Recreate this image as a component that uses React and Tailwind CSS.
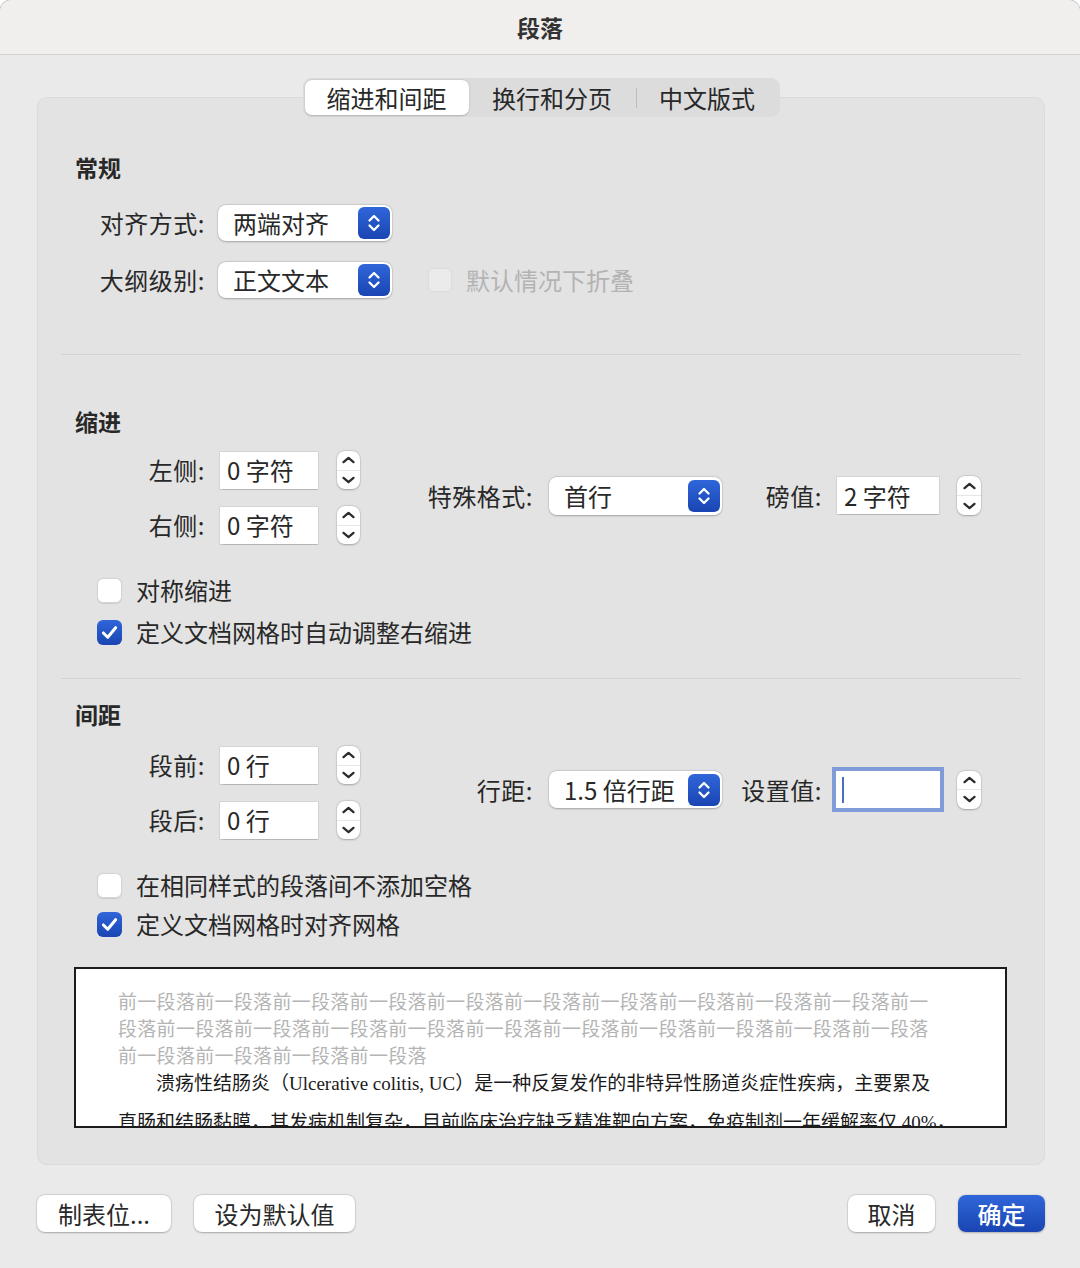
import React from "react";

const BLUE = "bg-gradient-to-b from-[#3066da] to-[#1a45b2]";

const PopupArrows = () => (
  <svg width="14" height="22" viewBox="0 0 14 22" fill="none" stroke="white" strokeWidth="2.3" strokeLinecap="round" strokeLinejoin="round">
    <path d="M2.5 8.5 L7 4 L11.5 8.5" />
    <path d="M2.5 13.5 L7 18 L11.5 13.5" />
  </svg>
);

const Popup = ({ text, w = "w-[174px]", h = "h-[36px]" }) => (
  <div className={`${w} ${h} bg-white rounded-[8px] shadow-[0_0.5px_2px_rgba(0,0,0,0.25),0_0_0_0.5px_rgba(0,0,0,0.08)] flex items-center pl-[15px] pr-[2px]`}>
    <span className="flex-1 leading-none">{text}</span>
    <div className={`w-[32px] h-[32px] rounded-[6px] ${BLUE} flex items-center justify-center`}>
      <PopupArrows />
    </div>
  </div>
);

const Stepper = ({ w = "w-[23px]", h = "h-[38px]", className = "" }) => (
  <div className={`${w} ${h} ${className} bg-white rounded-[8px] shadow-[0_0.5px_2px_rgba(0,0,0,0.25),0_0_0_0.5px_rgba(0,0,0,0.08)] flex flex-col`}>
    <div className="flex-1 flex items-center justify-center border-b border-[#e6e6e6]">
      <svg width="13" height="8" viewBox="0 0 13 8" fill="none" stroke="#2b2b2b" strokeWidth="2.2" strokeLinecap="round" strokeLinejoin="round">
        <path d="M1.5 6.2 L6.5 1.8 L11.5 6.2" />
      </svg>
    </div>
    <div className="flex-1 flex items-center justify-center">
      <svg width="13" height="8" viewBox="0 0 13 8" fill="none" stroke="#2b2b2b" strokeWidth="2.2" strokeLinecap="round" strokeLinejoin="round">
        <path d="M1.5 1.8 L6.5 6.2 L11.5 1.8" />
      </svg>
    </div>
  </div>
);

const Field = ({ text, w = "w-[98px]", className = "" }) => (
  <div className={`${w} h-[37px] ${className} bg-white shadow-[0_0_0_0.5px_rgba(0,0,0,0.12),0_0.5px_1px_rgba(0,0,0,0.15)] flex items-center pl-[7px] leading-none`}>
    {text}
  </div>
);

const Check = ({ checked, label }) => (
  <div className="h-[32px] flex items-center pl-[36px]">
    {checked ? (
      <div className={`w-[25px] h-[25px] rounded-[6px] ${BLUE} flex items-center justify-center`}>
        <svg width="21" height="21" viewBox="0 0 24 24" fill="none" stroke="white" strokeWidth="3.4" strokeLinecap="round" strokeLinejoin="round">
          <path d="M5 12.5 L10 17.5 L19 6.5" />
        </svg>
      </div>
    ) : (
      <div className="w-[25px] h-[25px] rounded-[6px] bg-white border border-[#d4d4d4] shadow-[0_0.5px_1px_rgba(0,0,0,0.1)]" />
    )}
    <span className="ml-[14px] leading-none">{label}</span>
  </div>
);

const Label = ({ w = "w-[144px]", children, className = "" }) => (
  <div className={`${w} ${className} text-right leading-none tracking-[0.5px]`}>{children}</div>
);

const Header = ({ children, className = "" }) => (
  <div className={`ml-[14px] h-[32px] flex items-center text-[23px] font-bold ${className}`}>{children}</div>
);

const LeftRows = ({ rows }) => (
  <div className="flex flex-col gap-[17px]">
    {rows.map((r) => (
      <div key={r[0]} className="h-[38px] flex items-center">
        <Label>{r[0]}</Label>
        <Field text={r[1]} className="ml-[15px]" />
        <Stepper className="ml-[19px]" />
      </div>
    ))}
  </div>
);

const grayLines = [
  "前一段落前一段落前一段落前一段落前一段落前一段落前一段落前一段落前一段落前一段落前一",
  "段落前一段落前一段落前一段落前一段落前一段落前一段落前一段落前一段落前一段落前一段落",
  "前一段落前一段落前一段落前一段落",
];

export default function App() {
  return (
    <div className="w-[1080px] h-[1268px] bg-white font-['Noto_Sans_CJK_SC','Noto_Sans',sans-serif] text-[24px] text-[#282828]">
      <div className="h-full rounded-t-[12px] bg-[#eaeaea] shadow-[0_0_0_1px_#c8c8c8] overflow-hidden flex flex-col">
        {/* title bar */}
        <div className="h-[55px] bg-[#f0efee] border-b border-[#d2d2d2] flex items-center justify-center">
          <span className="text-[23px] font-bold text-[#333]">段落</span>
        </div>

        <div className="pl-[37px] flex flex-col">
          {/* tabs */}
          <div className="relative z-10 mt-[23px] w-[1008px] flex justify-center">
            <div className="h-[39px] p-[2px] rounded-[9px] bg-[#dcdcdc] flex items-center">
              <div className="w-[164px] h-[35px] rounded-[7px] bg-white shadow-[0_0.5px_2px_rgba(0,0,0,0.2)] flex items-center justify-center leading-none">缩进和间距</div>
              <div className="w-[167px] flex items-center justify-center leading-none">换行和分页</div>
              <div className="w-px h-[20px] bg-[#bdbdbd]" />
              <div className="w-[141px] flex items-center justify-center leading-none">中文版式</div>
            </div>
          </div>

          {/* group box */}
          <div className="mt-[-20px] w-[1008px] h-[1068px] rounded-[10px] bg-[#e3e3e3] border border-[#dadada] px-[23px] pt-[53px] flex flex-col">
            <Header>常规</Header>
            <div className="mt-[22px] h-[36px] flex items-center">
              <Label>对齐方式:</Label>
              <div className="ml-[13px]"><Popup text="两端对齐" /></div>
            </div>
            <div className="mt-[21px] h-[36px] flex items-center">
              <Label>大纲级别:</Label>
              <div className="ml-[13px]"><Popup text="正文文本" /></div>
              <div className="ml-[36px] w-[24px] h-[24px] rounded-[6px] bg-[#ebebeb] border border-[#dcdcdc]" />
              <span className="ml-[14px] text-[#b3b3b3] leading-none">默认情况下折叠</span>
            </div>

            <div className="mt-[56px] h-px bg-[#d3d3d3]" />

            <Header className="mt-[50px]">缩进</Header>
            <div className="mt-[14px] flex items-start">
              <LeftRows rows={[["左侧:", "0 字符"], ["右侧:", "0 字符"]]} />
              <div className="ml-[60px] mt-[25px] h-[39px] flex items-center">
                <Label w="w-[113px]">特殊格式:</Label>
                <div className="ml-[16px]"><Popup text="首行" w="w-[173px]" h="h-[38px]" /></div>
                <Label w="w-[87px]" className="ml-[13px]">磅值:</Label>
                <Field text="2 字符" w="w-[102px]" className="ml-[15px]" />
                <Stepper w="w-[24px]" h="h-[39px]" className="ml-[18px]" />
              </div>
            </div>

            <div className="mt-[30px]"><Check label="对称缩进" /></div>
            <div className="mt-[10px]"><Check checked label="定义文档网格时自动调整右缩进" /></div>

            <div className="mt-[30px] h-px bg-[#d3d3d3]" />

            <Header className="mt-[19px]">间距</Header>
            <div className="mt-[16px] flex items-start">
              <LeftRows rows={[["段前:", "0 行"], ["段后:", "0 行"]]} />
              <div className="ml-[60px] mt-[23px] h-[41px] flex items-center">
                <Label w="w-[113px]">行距:</Label>
                <div className="ml-[16px]"><Popup text="1.5 倍行距" w="w-[173px]" h="h-[37px]" /></div>
                <Label w="w-[87px]" className="ml-[13px]">设置值:</Label>
                <div className="ml-[14px] w-[104px] h-[37px] bg-white shadow-[0_0_0_4px_#7f9cd8] flex items-center pl-[6px]">
                  <div className="w-[2px] h-[26px] bg-[#4a6fc0]" />
                </div>
                <Stepper w="w-[24px]" className="ml-[17px]" />
              </div>
            </div>

            <div className="mt-[30px]"><Check label="在相同样式的段落间不添加空格" /></div>
            <div className="mt-[7px]"><Check checked label="定义文档网格时对齐网格" /></div>

            {/* preview */}
            <div className="mt-[27px] ml-[13px] w-[933px] h-[161px] bg-white border-2 border-[#1c1c1c] overflow-hidden pl-[42px] pt-[20px] font-['Liberation_Serif','Noto_Sans_CJK_SC',serif] text-[19px]">
              {grayLines.map((l) => (
                <div key={l} className="h-[27px] leading-[27px] whitespace-nowrap text-[#b4b4b4] tracking-[0.3px]">{l}</div>
              ))}
              <div className="h-[27px] leading-[27px] whitespace-nowrap text-[#1a1a1a] pl-[38px]">
                溃疡性结肠炎（Ulcerative colitis, UC）是一种反复发作的非特异性肠道炎症性疾病，主要累及
              </div>
              <div className="mt-[12px] h-[27px] leading-[27px] whitespace-nowrap text-[#1a1a1a]">
                直肠和结肠黏膜，其发病机制复杂，目前临床治疗缺乏精准靶向方案，免疫制剂一年缓解率仅 40%，
              </div>
            </div>
          </div>

          {/* bottom buttons */}
          <div className="mt-[30px] w-[1008px] flex items-center">
            <div className="w-[134px] h-[37px] rounded-[8px] bg-white shadow-[0_0.5px_2px_rgba(0,0,0,0.25),0_0_0_0.5px_rgba(0,0,0,0.08)] flex items-center justify-center leading-none">制表位...</div>
            <div className="ml-[23px] w-[161px] h-[37px] rounded-[8px] bg-white shadow-[0_0.5px_2px_rgba(0,0,0,0.25),0_0_0_0.5px_rgba(0,0,0,0.08)] flex items-center justify-center leading-none">设为默认值</div>
            <div className="ml-auto w-[87px] h-[37px] rounded-[8px] bg-white shadow-[0_0.5px_2px_rgba(0,0,0,0.25),0_0_0_0.5px_rgba(0,0,0,0.08)] flex items-center justify-center leading-none">取消</div>
            <div className={`ml-[23px] w-[87px] h-[37px] rounded-[8px] ${BLUE} shadow-[0_0.5px_2px_rgba(0,0,0,0.25)] flex items-center justify-center leading-none text-white font-medium`}>确定</div>
          </div>
        </div>
      </div>
    </div>
  );
}
